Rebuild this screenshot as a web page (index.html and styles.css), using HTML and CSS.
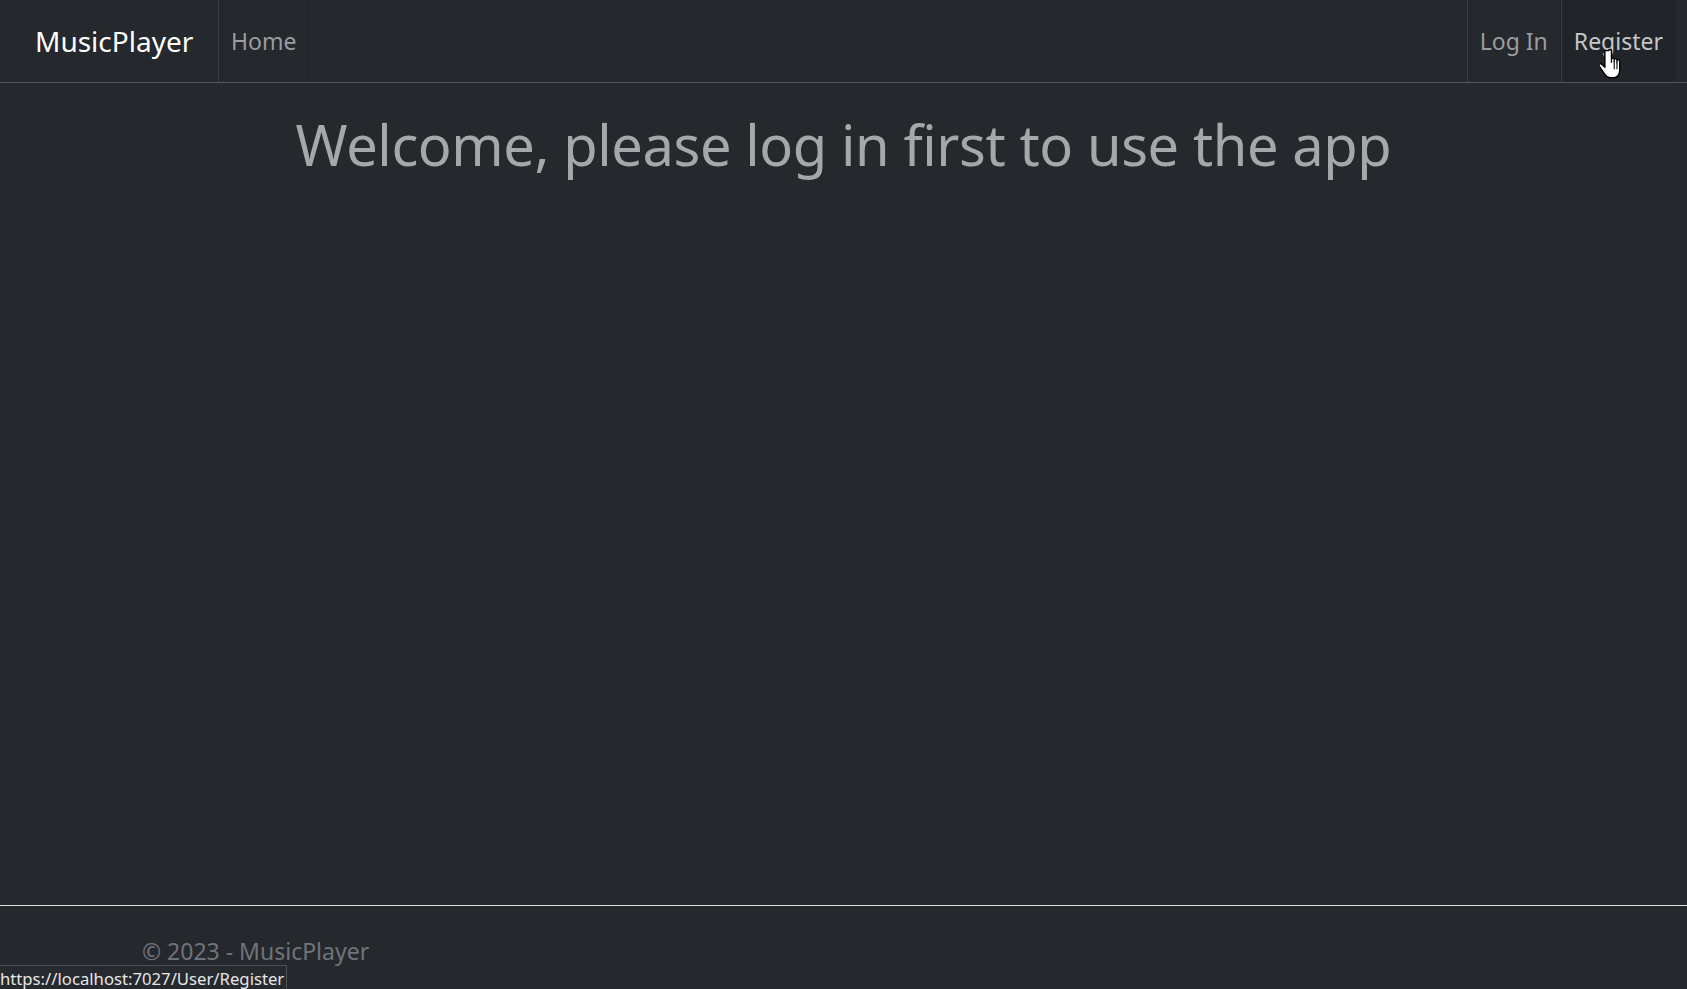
FILE: index.html
```html
<!DOCTYPE html>
<html lang="en">
<head>
<meta charset="utf-8">
<title>MusicPlayer</title>
<link rel="stylesheet" href="styles.css">
</head>
<body>
<div class="page">
  <header class="navbar">
    <a class="brand" href="#">MusicPlayer</a>
    <ul class="nav nav-left">
      <li class="nav-item"><a class="nav-link" href="#">Home</a></li>
    </ul>
    <ul class="nav nav-right">
      <li class="nav-item"><a class="nav-link" href="#">Log In</a></li>
      <li class="nav-item hover"><a class="nav-link" href="#">Register</a>
        <svg class="cursor" width="28" height="36" viewBox="0 0 26 34">
          <path d="M8 2.5c0-1.4 2.6-1.4 2.6 0v11l0-3c0-1.4 2.6-1.4 2.6 0v3l0-2.4c0-1.4 2.6-1.4 2.6 0v2.8l0-1.8c0-1.4 2.6-1.4 2.6 0v8.5c0 4-2.200 7.5-5.6 7.5h-3.6c-2.4 0-3.8-1.6-5-3.4l-5.2-7.8c-.9-1.4 1-2.8 2.3-1.600l3.1 3V2.5z" fill="#fff" stroke="#000" stroke-width="1.3" stroke-linejoin="round"/>
          <path d="M13.2 14v6M15.8 14v6M18.4 14v6" stroke="#000" stroke-width="1"/>
        </svg>
      </li>
    </ul>
  </header>
  <main class="main">
    <h1 class="welcome">Welcome, please log in first to use the app</h1>
  </main>
  <footer class="footer">
    <div class="container">© 2023 - MusicPlayer</div>
  </footer>
</div>
<div class="statusbar">https://localhost:7027/User/Register</div>
</body>
</html>
```

FILE: styles.css
```css
html, body {
  margin: 0;
  padding: 0;
  height: 100%;
}
body {
  background: #25282d;
  font-family: "Noto Sans", "Open Sans", sans-serif;
  overflow: hidden;
}
.page {
  display: flex;
  flex-direction: column;
  height: 989px;
}
.navbar {
  display: flex;
  align-items: stretch;
  height: 82px;
  border-bottom: 1px solid #54575c;
  box-sizing: content-box;
}
.brand {
  display: flex;
  align-items: center;
  padding-left: 35px;
  width: 183px;
  color: #ffffff;
  font-size: 28px;
  text-decoration: none;
}
.nav {
  display: flex;
  list-style: none;
  margin: 0;
  padding: 0;
}
.nav-right {
  margin-left: auto;
  margin-right: 11px;
}
.nav-item {
  display: flex;
  align-items: center;
  border-left: 1px solid #3a3d42;
  border-right: 1px solid #1f2226;
  position: relative;
}
.nav-link {
  padding: 0 12px;
  color: #9a9c9f;
  font-size: 23px;
  text-decoration: none;
}
.nav-item.hover {
  background: #212428;
}
.nav-item.hover .nav-link {
  color: #c4c6c8;
}
.cursor {
  position: absolute;
  left: 38px;
  top: 48px;
}
.main {
  flex: 1;
}
.welcome {
  margin: 25px 0 0;
  text-align: center;
  color: #a5a7a9;
  font-weight: 400;
  font-size: 56px;
  letter-spacing: -0.4px;
  line-height: 72px;
}
.footer {
  border-top: 1px solid #dcdfe2;
  height: 83px;
}
.container {
  padding-left: 142px;
  line-height: 90px;
  color: #6e7479;
  font-size: 23px;
}
.statusbar {
  position: absolute;
  left: 0;
  bottom: 0;
  height: 23px;
  padding: 0 2px 0 0;
  background: #26292e;
  border-top: 1px solid #4e5156;
  border-right: 1px solid #4e5156;
  color: #e6e6e6;
  font-size: 16.7px;
  line-height: 26px;
  overflow: hidden;
}
```
